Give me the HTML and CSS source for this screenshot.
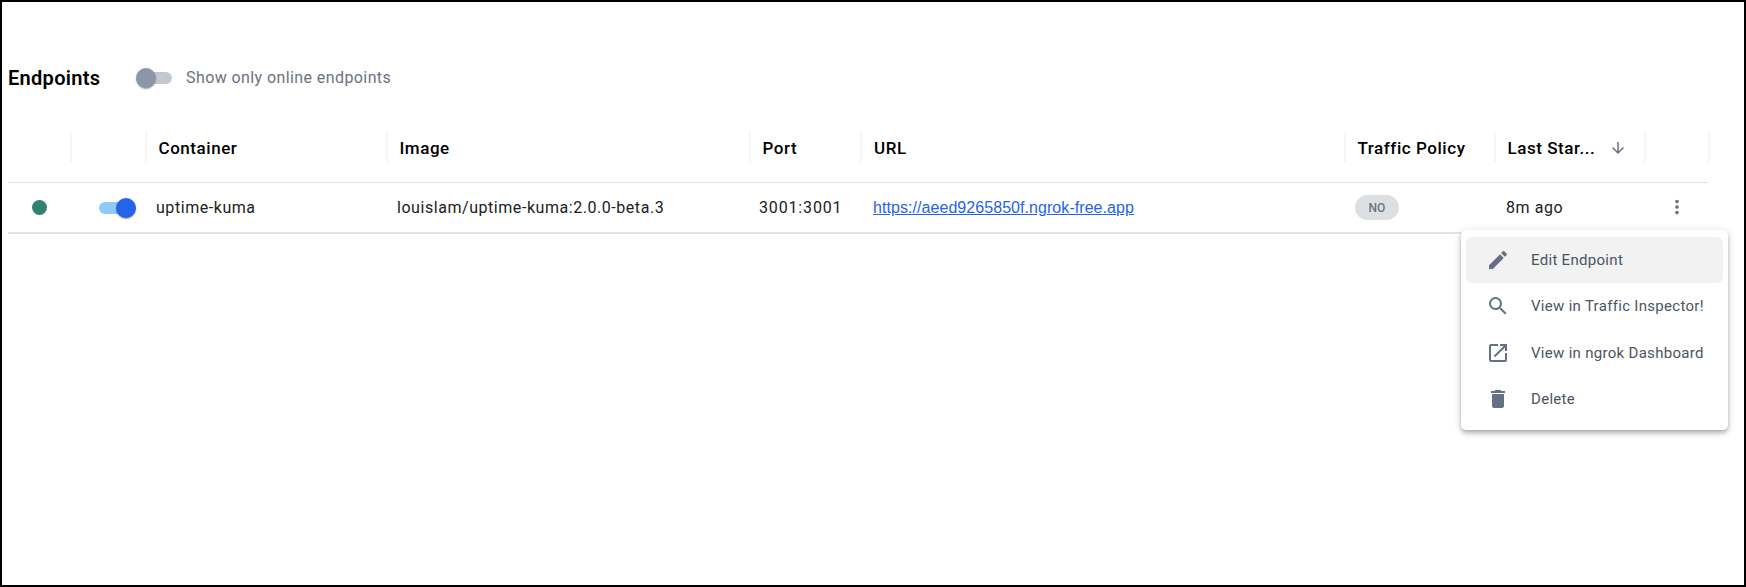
FILE: index.html
```html
<!DOCTYPE html>
<html lang="en">
<head>
<meta charset="utf-8">
<title>Endpoints</title>
<link rel="stylesheet" href="styles.css">
</head>
<body>
<main class="page">
  <section class="toolbar">
    <h2 class="title">Endpoints</h2>
    <span class="switch switch-off"><span class="track"></span><span class="thumb"></span></span>
    <span class="toggle-label">Show only online endpoints</span>
  </section>
  <section class="grid">
    <div class="row head">
      <div class="hcell"></div>
      <div class="hcell sep"></div>
      <div class="hcell sep">Container</div>
      <div class="hcell sep">Image</div>
      <div class="hcell sep">Port</div>
      <div class="hcell sep url-head">URL</div>
      <div class="hcell sep">Traffic Policy</div>
      <div class="hcell sep sort"><span class="hlabel">Last Star...</span>
        <svg class="sort-icon" viewBox="0 0 24 24"><path d="M20 12l-1.41-1.41L13 16.17V4h-2v12.17l-5.58-5.59L4 12l8 8 8-8z"/></svg></div>
      <div class="hcell sep"></div>
      <div class="hcell sep"></div>
    </div>
    <div class="row body-row">
      <div class="cell center"><span class="dot"></span></div>
      <div class="cell center-switch"><span class="switch switch-on"><span class="track"></span><span class="thumb"></span></span></div>
      <div class="cell name">uptime-kuma</div>
      <div class="cell image">louislam/uptime-kuma:2.0.0-beta.3</div>
      <div class="cell port">3001:3001</div>
      <div class="cell url"><a class="link" href="#">https://aeed9265850f.ngrok-free.app</a></div>
      <div class="cell policy"><span class="chip">NO</span></div>
      <div class="cell started">8m ago</div>
      <div class="cell"></div>
      <div class="cell kebab">
        <svg class="kebab-icon" viewBox="0 0 24 24"><path d="M12 8c1.100 0 2-.9 2-2s-.9-2-2-2-2 .9-2 2 .9 2 2 2zm0 2c-1.100 0-2 .9-2 2s.9 2 2 2 2-.9 2-2-.9-2-2-2zm0 6c-1.100 0-2 .9-2 2s.9 2 2 2 2-.9 2-2-.9-2-2-2z"/></svg>
      </div>
    </div>
  </section>
</main>
<ul class="menu">
  <li class="item active">
    <svg class="item-icon" viewBox="0 0 24 24"><path d="M3 17.250V21h3.750L17.810 9.940l-3.750-3.750L3 17.250zM20.710 7.040c.39-.39.39-1.020 0-1.410l-2.340-2.340a.996.996 0 0 0-1.410 0l-1.830 1.830 3.750 3.750 1.830-1.830z"/></svg>
    <span>Edit Endpoint</span>
  </li>
  <li class="item">
    <svg class="item-icon" viewBox="0 0 24 24"><path d="M15.500 14h-.79l-.28-.27A6.470 6.470 0 0 0 16 9.500 6.500 6.500 0 1 0 9.500 16c1.610 0 3.090-.59 4.230-1.570l.27.28v.79l5 4.990L20.490 19l-4.990-5zm-6 0C7.010 14 5 11.990 5 9.500S7.010 5 9.500 5 14 7.010 14 9.500 11.990 14 9.500 14z"/></svg>
    <span>View in Traffic Inspector!</span>
  </li>
  <li class="item">
    <svg class="item-icon" viewBox="0 0 24 24"><path d="M19 19H5V5h7V3H5a2 2 0 0 0-2 2v14a2 2 0 0 0 2 2h14c1.100 0 2-.9 2-2v-7h-2v7zM14 3v2h3.590l-9.830 9.830 1.410 1.410L19 6.410V10h2V3h-7z"/></svg>
    <span>View in ngrok Dashboard</span>
  </li>
  <li class="item">
    <svg class="item-icon" viewBox="0 0 24 24"><path d="M6 19c0 1.100.9 2 2 2h8c1.100 0 2-.9 2-2V7H6v12zM19 4h-3.500l-1-1h-5l-1 1H5v2h14V4z"/></svg>
    <span>Delete</span>
  </li>
</ul>
</body>
</html>
```
FILE: styles.css
```css
* { box-sizing: border-box; }
html, body { margin: 0; height: 100%; }
body {
  position: relative;
  height: 587px;
  overflow: hidden;
  background: #fff;
  border: 2px solid #000;
  font-family: Roboto, "Liberation Sans", sans-serif;
  color: #111;
}
.page { padding: 0 36px 0 6px; }
.toolbar {
  display: flex;
  align-items: center;
  height: 60px;
  margin-top: 46px;
}
.title {
  margin: 0;
  width: 128px;
  font-size: 20px;
  font-weight: 600;
  letter-spacing: .3px;
  line-height: 28px;
  color: #000;
}
.switch { position: relative; display: block; width: 36px; height: 20px; flex: none; }
.track {
  position: absolute;
  left: 0; right: 0; top: 4px;
  height: 12px;
  border-radius: 6px;
}
.thumb {
  position: absolute;
  top: 0;
  width: 20px; height: 20px;
  border-radius: 50%;
  box-shadow: 0 2px 1px -1px rgba(0,0,0,.2), 0 1px 1px 0 rgba(0,0,0,.14), 0 1px 3px 0 rgba(0,0,0,.12);
}
.switch-off .track { background: #c3c7d1; }
.switch-off .thumb { left: 0; background: #8d95a8; }
.switch-on { width: 37px; }
.switch-on .track { background: #90caf9; }
.switch-on .thumb { right: 0; background: #2563eb; }
.toggle-label {
  margin-left: 14px;
  padding-bottom: 2px;
  font-size: 16px;
  letter-spacing: .41px;
  color: #6b7280;
}
.grid { margin-top: 13px; }
.row {
  display: grid;
  grid-template-columns: 62px 75px 241px 363px 111px 484px 150px 150px 1fr 0;
  width: 1700px;
}
.head { height: 62px; border-bottom: 1px solid #dedede; padding-top: 11px; }
.hcell {
  position: relative;
  display: flex;
  align-items: center;
  height: 30px;
  padding: 2px 0 0 13.5px;
  font-size: 17px;
  font-weight: 500;
  letter-spacing: .55px;
  color: #000;
  white-space: nowrap;
}
.url-head { padding-left: 14px; }
.sep::before {
  content: "";
  position: absolute;
  left: 0; top: 0; bottom: 0;
  width: 2px;
  background: #f5f5f5;
}
.sort-icon { width: 18px; height: 18px; margin-left: 14px; fill: #6b7280; }
.body-row { height: 51px; border-bottom: 2px solid #e4e4e4; }
.cell {
  display: flex;
  align-items: center;
  font-size: 16px;
  letter-spacing: .55px;
  color: #212121;
  white-space: nowrap;
  min-width: 0;
}
.center { justify-content: center; }
.dot { width: 15px; height: 15px; border-radius: 50%; background: #2f8072; }
.center-switch { padding-left: 29px; }
.name { padding-left: 11px; }
.image { padding-left: 11px; }
.port { padding-left: 10px; letter-spacing: .85px; }
.url { padding-left: 13px; }
.link { font-family: "Liberation Sans", Arial, sans-serif; font-size: 16px; letter-spacing: .06px; color: #2563eb; }
.policy { padding-left: 11px; }
.chip {
  display: inline-flex;
  align-items: center;
  justify-content: center;
  width: 44px; height: 25px;
  border-radius: 13px;
  background: #dde0e3;
  font-size: 12px;
  font-weight: 500;
  letter-spacing: 0;
  color: #6b7280;
}
.started { padding-left: 12px; }
.kebab { position: relative; }
.kebab-icon { position: absolute; left: -42px; top: 13px; width: 22px; height: 22px; fill: #6b7280; }
.menu {
  position: absolute;
  left: 1459px; top: 228px;
  width: 267px; height: 200px;
  margin: 0;
  padding: 7px 5px;
  list-style: none;
  background: #fff;
  border-radius: 5px;
  box-shadow: 0 2px 4px -1px rgba(0,0,0,.2), 0 4px 5px 0 rgba(0,0,0,.14), 0 1px 10px 0 rgba(0,0,0,.12);
}
.item {
  display: flex;
  align-items: center;
  height: 46.3px;
  padding-left: 20px;
  border-radius: 6px;
  font-size: 15px;
  letter-spacing: .3px;
  color: #4b5563;
  white-space: nowrap;
}
.item.active { background: #f2f2f2; }
.item-icon { width: 24px; height: 24px; margin-right: 21px; fill: #667085; flex: none; }
```
